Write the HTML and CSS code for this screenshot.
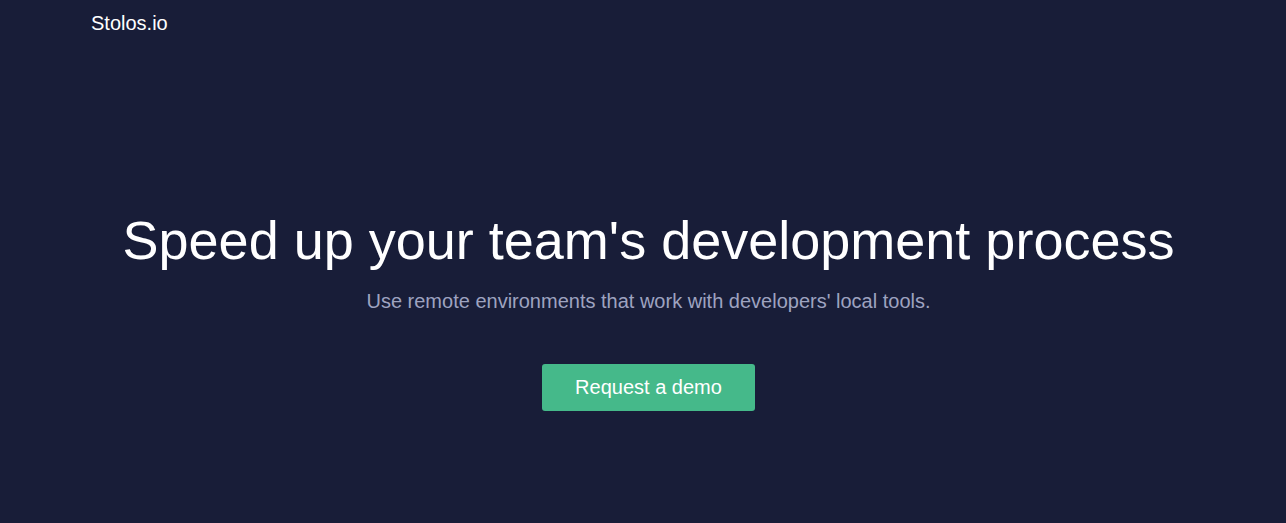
FILE: index.html
```html
<!DOCTYPE html>
<html>
<head>
<meta charset="utf-8">
<link rel="stylesheet" href="styles.css">
</head>
<body>
<div class="page">
  <header class="nav">
    <div class="logo">Stolos.io</div>
  </header>
  <main class="hero">
    <h1 class="title">Speed up your team's development process</h1>
    <p class="subtitle">Use remote environments that work with developers' local tools.</p>
    <a class="cta" href="#">Request a demo</a>
  </main>
</div>
</body>
</html>
```
FILE: styles.css
```css
html, body {
  margin: 0;
  padding: 0;
  background: #181d38;
  font-family: "Liberation Sans", Arial, sans-serif;
  color: #ffffff;
}
.page {
  min-height: 523px;
  display: flex;
  flex-direction: column;
}
.nav {
  padding: 12px 91px 0;
  height: 32px;
}
.logo {
  font-size: 20px;
  line-height: 22px;
  color: #ffffff;
}
.hero {
  display: flex;
  flex-direction: column;
  align-items: center;
  padding-top: 164px;
  padding-left: 11px;
}
.title {
  margin: 0;
  font-size: 54px;
  font-weight: 400;
  line-height: 64px;
  color: #ffffff;
}
.subtitle {
  margin: 17px 0 0;
  font-size: 20px;
  line-height: 24px;
  color: #9ea3c0;
}
.cta {
  margin-top: 51px;
  display: inline-flex;
  align-items: center;
  justify-content: center;
  width: 213px;
  height: 47px;
  background: #45b98a;
  border-radius: 3px;
  color: #ffffff;
  text-decoration: none;
  font-size: 20px;
}
```
